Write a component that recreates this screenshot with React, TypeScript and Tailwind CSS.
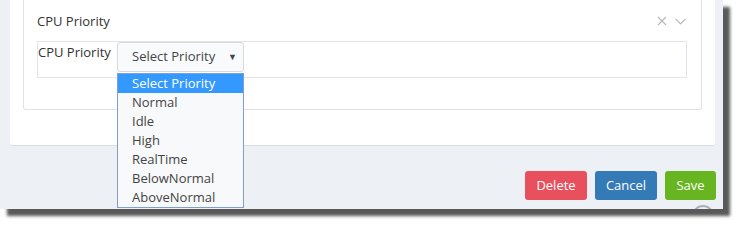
import React from "react";

export default function App() {
  const items = ["Select Priority", "Normal", "Idle", "High", "RealTime", "BelowNormal", "AboveNormal"];
  return (
    <div className="w-[740px] h-[225px] bg-white relative overflow-hidden" style={{ fontFamily: '"Open Sans", "Liberation Sans", sans-serif' }}>
      <div className="relative w-[723px] h-[209px] bg-[#edf0f5] shadow-[7px_7px_3px_rgba(60,60,60,0.85)] overflow-hidden flex flex-col">
        <div className="ml-[10px] mr-[8px] h-[146px] bg-white border-b border-[#d9dde3] rounded-b-[3px] flex flex-col">
          <div className="ml-[13px] mr-[13px] h-[110px] border-x border-b border-[#dfe2e6] rounded-b-[3px] pl-[13px] pr-[14px] flex flex-col">
            <div className="h-[41px] flex items-start justify-between pt-[12px]">
              <span className="text-[13px] text-[#333] leading-[18px]">CPU Priority</span>
              <div className="flex items-center gap-[8px] mt-[4px] mr-[1px]">
                <svg width="10" height="10" viewBox="0 0 10 10" fill="none" stroke="#b4b8bd" strokeWidth="1.2">
                  <path d="M1 1L9 9M9 1L1 9" />
                </svg>
                <svg width="11" height="7" viewBox="0 0 11 7" fill="none" stroke="#b4b8bd" strokeWidth="1.2">
                  <path d="M0.5 0.8L5.5 5.8L10.5 0.8" />
                </svg>
              </div>
            </div>
            <div className="h-[37px] border border-[#e1e4e8] flex items-start">
              <span className="text-[13px] text-[#333] leading-[18px] mt-[1px] w-[79px]">CPU Priority</span>
              <div className="w-[127px] h-[30px] border border-[#d5dae0] rounded-[3px] bg-[#f9fafc] flex items-center justify-between pl-[14px] pr-[6px]">
                <span className="text-[13px] text-[#444]">Select Priority</span>
                <span className="text-[9px] text-[#444]">▼</span>
              </div>
            </div>
          </div>
        </div>
        <div className="flex justify-end gap-[8px] mt-[25px] mr-[7px]">
          <button className="w-[62px] h-[29px] rounded-[3px] bg-[#e8505e] text-white text-[13px]">Delete</button>
          <button className="w-[62px] h-[29px] rounded-[3px] bg-[#337ab7] text-white text-[13px]">Cancel</button>
          <button className="w-[51px] h-[29px] rounded-[3px] bg-[#67b520] text-white text-[13px]">Save</button>
        </div>
        <div className="absolute left-[692px] top-[205px] w-[22px] h-[22px] rounded-full border-2 border-[#a9b0ba] bg-[#edf0f5]"></div>
        <div className="absolute left-[117px] top-[73px] w-[127px] border border-[#7f9fd0] bg-[#f8f9fb] flex flex-col">
          {items.map((t, i) => (
            <div key={t} className={(i === 0 ? "bg-[#3399ff] text-white " : "text-[#444] ") + "h-[19px] leading-[19px] pl-[14px] text-[13px]"}>
              {t}
            </div>
          ))}
        </div>
      </div>
    </div>
  );
}
